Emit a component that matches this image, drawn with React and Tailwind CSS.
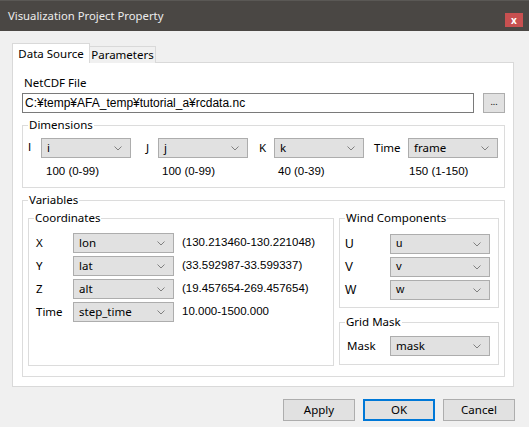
import React from 'react';

const ui = { fontFamily: '"Noto Sans", "Segoe UI", sans-serif' };
const gothic = { fontFamily: '"Liberation Sans", "Noto Sans CJK JP", sans-serif' };

function Chevron() {
  return (
    <svg width="8" height="5" viewBox="0 0 8 5" className="shrink-0">
      <polyline points="0.5,0.5 4,4 7.5,0.5" fill="none" stroke="#808080" strokeWidth="1" />
    </svg>
  );
}

function Combo({ value, width, font = ui }) {
  return (
    <div
      className="h-[20px] flex items-center justify-between pl-[5px] pr-[8px] bg-[#e1e1e1] border border-[#adadad] text-[11.5px] text-black shrink-0"
      style={{ width, ...font }}
    >
      <span className="leading-none">{value}</span>
      <Chevron />
    </div>
  );
}

function Group({ title, className, children }) {
  return (
    <fieldset className={`border border-[#dcdcdc] ${className}`}>
      <legend className="ml-[5px] px-[1px] text-[11.5px] leading-[16px] text-black" style={ui}>
        {title}
      </legend>
      {children}
    </fieldset>
  );
}

const coords = [
  { label: 'X', value: 'lon', range: '(130.213460-130.221048)' },
  { label: 'Y', value: 'lat', range: '(33.592987-33.599337)' },
  { label: 'Z', value: 'alt', range: '(19.457654-269.457654)' },
  { label: 'Time', value: 'step_time', range: '10.000-1500.000' },
];

const wind = [
  { label: 'U', value: 'u' },
  { label: 'V', value: 'v' },
  { label: 'W', value: 'w' },
];

function Button({ children, primary }) {
  return (
    <button
      className={`w-[72px] h-[22px] bg-[#e1e1e1] text-[11.5px] text-black leading-none ${
        primary ? 'border-2 border-[#0078d7]' : 'border border-[#adadad]'
      }`}
      style={ui}
    >
      {children}
    </button>
  );
}

export default function App() {
  return (
    <div className="w-[529px] h-[427px] bg-[#f0f0f0] flex flex-col overflow-hidden">
      {/* Title bar */}
      <div className="h-[31px] bg-[#4a4744] flex justify-between shrink-0 border-t border-[#5a5855]">
        <span className="self-center ml-[8px] text-[11.3px] text-[#ececec]" style={ui}>
          Visualization Project Property
        </span>
        <div className="self-end mb-[4px] mr-[6px] w-[18px] h-[14px] bg-[#c75050] flex items-center justify-center">
          <span className="text-white text-[10px] font-bold leading-none" style={ui}>x</span>
        </div>
      </div>

      {/* Tabs */}
      <div className="ml-[12px] mt-[12px] flex items-end h-[20px] relative z-10">
        <div className="w-[78px] h-[20px] bg-white border border-b-0 border-[#d9d9d9] flex items-center justify-center text-[11.5px] text-black" style={ui}>
          Data Source
        </div>
        <div className="w-[66px] h-[17px] bg-[#f0f0f0] border border-l-0 border-b-0 border-[#d9d9d9] flex items-center justify-center text-[11.5px] text-black" style={ui}>
          Parameters
        </div>
      </div>

      {/* Panel */}
      <div className="ml-[12px] -mt-[1px] w-[502px] h-[325px] bg-white border border-[#d9d9d9] pl-[9px] pt-[12px] flex flex-col">
        <span className="ml-[2px] text-[11.5px] leading-[16px] text-black" style={ui}>NetCDF File</span>
        <div className="mt-[2px] flex items-center">
          <div className="w-[452px] h-[20px] border border-[#7a7a7a] flex items-center pl-[2px] text-[12px] text-black" style={gothic}>
            C:¥temp¥AFA_temp¥tutorial_a¥rcdata.nc
          </div>
          <div className="ml-[9px] w-[22px] h-[20px] bg-[#e1e1e1] border border-[#adadad] flex items-center justify-center text-[9px] text-black leading-none pb-[3px]" style={ui}>
            ...
          </div>
        </div>

        {/* Dimensions */}
        <Group title="Dimensions" className="mt-[4px] w-[483px] h-[71px]">
          <div className="mt-[5px] flex items-center text-[11.5px] text-black pl-[5px]" style={ui}>
            <span className="w-[13px]" style={gothic}>I</span>
            <Combo value="i" width={90} />
            <span className="ml-[15px] w-[12px]">J</span>
            <Combo value="j" width={90} />
            <span className="ml-[11px] w-[15px]">K</span>
            <Combo value="k" width={90} />
            <span className="ml-[10px] w-[34px]">Time</span>
            <Combo value="frame" width={90} />
          </div>
          <div className="mt-[5px] flex text-[11.5px] leading-[16px] text-black" style={gothic}>
            <span className="ml-[23px] w-[116px]">100 (0-99)</span>
            <span className="w-[116px]">100 (0-99)</span>
            <span className="w-[131px]">40 (0-39)</span>
            <span>150 (1-150)</span>
          </div>
        </Group>

        {/* Variables */}
        <Group title="Variables" className="mt-[4px] w-[483px] h-[185px]">
          <div className="mt-[2px] ml-[5px] flex">
            <Group title="Coordinates" className="w-[306px] h-[156px]">
              <div className="mt-[7px] flex flex-col gap-[3px] pl-[7px]">
                {coords.map((c) => (
                  <div key={c.label} className="flex items-center text-[11.5px] text-black">
                    <span className="w-[37px]" style={ui}>{c.label}</span>
                    <Combo value={c.value} width={101} />
                    <span className="ml-[8px] text-[11.5px]" style={gothic}>{c.range}</span>
                  </div>
                ))}
              </div>
            </Group>
            <div className="ml-[5px] flex flex-col">
              <Group title="Wind Components" className="w-[160px] h-[98px]">
                <div className="mt-[8px] flex flex-col gap-[3px] pl-[5px]">
                  {wind.map((w) => (
                    <div key={w.label} className="flex items-center text-[12px] text-black">
                      <span className="w-[45px]" style={gothic}>{w.label}</span>
                      <Combo value={w.value} width={100} font={gothic} />
                    </div>
                  ))}
                </div>
              </Group>
              <Group title="Grid Mask" className="mt-[6px] w-[160px] h-[51px]">
                <div className="mt-[6px] flex items-center text-[11.5px] text-black pl-[7px]">
                  <span className="w-[43px]" style={ui}>Mask</span>
                  <Combo value="mask" width={100} />
                </div>
              </Group>
            </div>
          </div>
        </Group>
      </div>

      {/* Buttons */}
      <div className="mt-[12px] mr-[14px] flex justify-end gap-[8px]">
        <Button>Apply</Button>
        <Button primary>OK</Button>
        <Button>Cancel</Button>
      </div>
    </div>
  );
}
